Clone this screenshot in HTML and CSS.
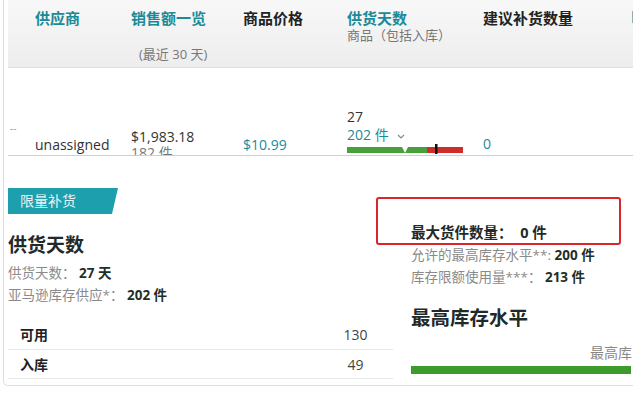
FILE: index.html
```html
<!DOCTYPE html>
<html lang="zh-CN">
<head>
    <meta charset="UTF-8">
    <meta name="viewport" content="width=device-width, initial-scale=1.0">
    <title>限量补货</title>
    <link rel="stylesheet" href="styles.css">
</head>
<body>

<div class="card">

    <div class="grid head">
        <div></div>
        <div class="col-title link">供应商</div>
        <div>
            <div class="col-title link">销售额一览</div>
            <div class="sub period">(最近 30 天)</div>
        </div>
        <div class="col-title">商品价格</div>
        <div>
            <div class="col-title link">供货天数</div>
            <div class="sub">商品（包括入库）</div>
        </div>
        <div class="col-title">建议补货数量</div>
        <div><span class="edge-mark"></span></div>
    </div>

    <div class="grid row">
        <div class="dash">--</div>
        <div class="cell">unassigned</div>
        <div class="cell sales">
            <div>$1,983.18</div>
            <div class="muted">182 件</div>
        </div>
        <div class="cell link">$10.99</div>
        <div class="cell supply">
            <div>27</div>
            <div class="link">202 件
                <svg class="chevron" width="8" height="5" viewBox="0 0 8 5"><path d="M1 1 L4 4 L7 1" fill="none" stroke="#888" stroke-width="1.2"/></svg>
            </div>
            <svg class="bar" width="116" height="10" viewBox="0 0 116 10">
                <polygon points="0,3 55,3 58,9 0,9" fill="#47a03a"/>
                <polygon points="61,3 80,3 80,9 58,9" fill="#47a03a"/>
                <rect x="80" y="3" width="36" height="6" fill="#cc2f2a"/>
                <rect x="88" y="0" width="2.5" height="10" fill="#111"/>
            </svg>
        </div>
        <div class="cell link zero">0</div>
        <div></div>
    </div>

    <div class="detail">
        <div class="detail-left">
            <div class="ribbon">限量补货</div>
            <h2>供货天数</h2>
            <div class="kv"><span class="label">供货天数：</span> <b>27 天</b></div>
            <div class="kv"><span class="label">亚马逊库存供应*：</span> <b>202 件</b></div>

            <div class="stock">
                <div class="stock-row"><span>可用</span><span class="num">130</span></div>
                <div class="stock-row"><span>入库</span><span class="num">49</span></div>
            </div>
        </div>

        <div class="detail-right">
            <div class="kv strong">最大货件数量：&nbsp; 0 件</div>
            <div class="kv"><span class="label">允许的最高库存水平**:</span> <b>200 件</b></div>
            <div class="kv"><span class="label">库存限额使用量***：</span> <b>213 件</b></div>
            <h2 class="max-title">最高库存水平</h2>
            <div class="bar-label">最高库</div>
            <div class="level-bar"></div>
        </div>
    </div>

    <!-- 标注框 -->
    <div class="callout"></div>

</div>

</body>
</html>
```

FILE: styles.css
```css
body {
    margin: 0;
    background: #fff;
    font-family: "Open Sans", "Noto Sans CJK SC", sans-serif;
    color: #333;
}

.card {
    position: relative;
    margin-left: 3px;
    width: 625px;
    height: 385px;
    padding-left: 4px;
    border-left: 1px solid #dedede;
    border-bottom: 1px solid #dedede;
    border-radius: 0 0 0 5px;
}

.grid {
    display: grid;
    grid-template-columns: 27px 96px 112px 104px 136px 149px 1fr;
}

.link {
    color: #1b8a98;
}

/* 表头 */
.head {
    height: 59px;
    padding-top: 8px;
    overflow: hidden;
    background: linear-gradient(#f8f8f8, #ededed);
    border-bottom: 1px solid #e0e0e0;
}

.col-title {
    font-size: 15px;
    font-weight: bold;
    line-height: 20px;
    white-space: nowrap;
    color: #222;
}

.col-title.link {
    color: #1b8a98;
}

.sub {
    font-size: 13px;
    line-height: 14px;
    color: #777;
    white-space: nowrap;
}

.sub.period {
    margin-top: 19px;
    padding-left: 8px;
}

.edge-mark {
    display: block;
    width: 1px;
    height: 12px;
    margin-top: 3px;
    background: #9aa;
}

/* 商品行 */
.row {
    height: 87px;
    overflow: hidden;
    align-items: end;
    border-bottom: 1px solid #cfcfcf;
    font-size: 14px;
}

.dash {
    font-size: 10px;
    color: #999;
    padding-left: 2px;
    margin-bottom: 20px;
}

.cell {
    line-height: 20px;
    white-space: nowrap;
}

.sales {
    line-height: 16px;
    margin-bottom: -6px;
}

.muted {
    color: #777;
}

.supply {
    line-height: 18px;
}

.chevron {
    margin-left: 5px;
    vertical-align: middle;
}

.bar {
    display: block;
    margin-bottom: 1px;
}

.zero {
    margin-bottom: 1px;
}

/* 详情 */
.detail {
    display: flex;
    gap: 18px;
}

.detail-left {
    width: 387px;
}

.detail-right {
    width: 223px;
    padding-top: 66px;
}

.ribbon {
    width: 98px;
    height: 26px;
    margin-top: 32px;
    padding-left: 12px;
    background: #1e9fae;
    color: #e6f6f8;
    font-size: 14px;
    line-height: 26px;
    clip-path: polygon(0 0, 100% 0, calc(100% - 6px) 100%, 0 100%);
}

h2 {
    margin: 18px 0 4px;
    font-size: 19px;
    line-height: 26px;
    color: #1f2a2a;
}

.kv {
    font-size: 13.5px;
    line-height: 22px;
    white-space: nowrap;
}

.kv .label {
    color: #8a8a8a;
}

.kv b {
    color: #1f2f28;
}

.kv.strong {
    font-weight: bold;
    font-size: 14.5px;
    color: #1f2a2a;
}

.stock {
    margin-top: 15px;
}

.stock-row {
    display: grid;
    grid-template-columns: 1fr 75px;
    height: 28px;
    padding-left: 12px;
    border-bottom: 1px solid #e8e8e8;
    font-size: 14px;
    line-height: 28px;
}

.stock-row span:first-child {
    font-weight: bold;
    color: #222;
}

.stock-row + .stock-row {
    padding-top: 1px;
    height: 27px;
}

.num {
    text-align: center;
    color: #444;
}

.max-title {
    margin: 17px 0 0;
    font-size: 19.5px;
}

.bar-label {
    margin-top: 12px;
    margin-right: 1px;
    text-align: right;
    font-size: 14px;
    line-height: 20px;
    color: #888;
}

.level-bar {
    width: 220px;
    height: 8px;
    margin-top: 3px;
    background: #3d9a2d;
}

.callout {
    position: absolute;
    left: 372px;
    top: 197px;
    width: 241px;
    height: 44px;
    border: 2px solid #d9262b;
    border-radius: 3px;
}
```
